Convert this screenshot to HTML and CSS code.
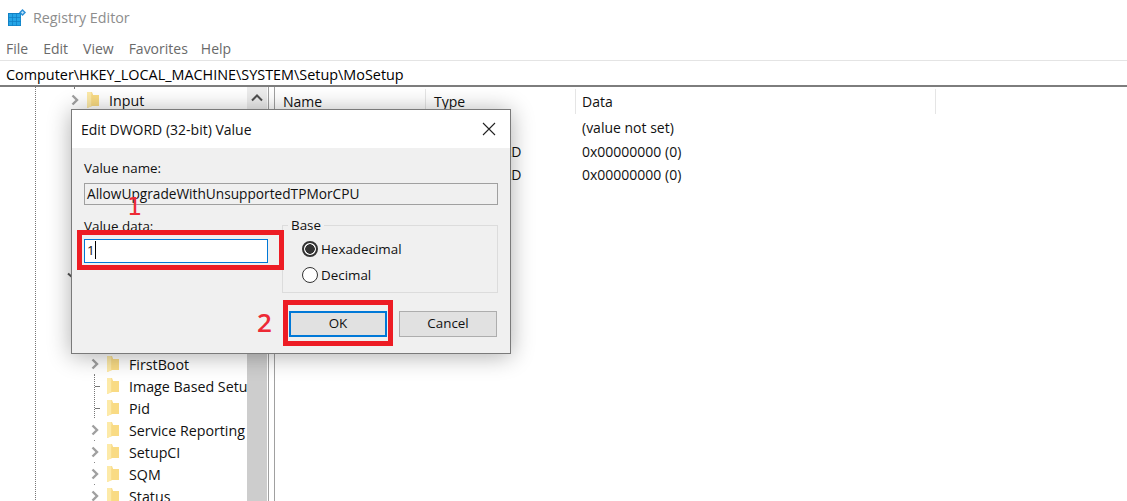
FILE: index.html
```html
<!DOCTYPE html>
<html lang="en">
<head>
<meta charset="utf-8">
<title>Registry Editor</title>
<link rel="stylesheet" href="styles.css">
</head>
<body>
<svg class="defs" width="0" height="0" aria-hidden="true">
  <symbol id="folder" viewBox="0 0 14 18">
    <path d="M1 1h5l1 3h6v11H6l-5 2z" fill="#f7d67e"/>
    <path d="M1 1h4.500v14.500L1 17z" fill="#fdeaa8"/>
    <path d="M5.500 4H13v11H5.500z" fill="#f9db84"/>
  </symbol>
  <symbol id="chev" viewBox="0 0 8 12">
    <path d="M1.500 1.500 6 6l-4.500 4.500" fill="none" stroke="#a0a0a0" stroke-width="2.400"/>
  </symbol>
</svg>
<div class="app">
  <header class="titlebar">
    <svg class="appicon" width="18" height="18" viewBox="0 0 18 18">
      <path d="M0 4h13v13H0z" fill="#1280c4"/>
      <path d="M1 5h3.300v3.300H1zM5 5h3.300v3.300H5zM9 5h3.300v3.300H9zM1 9h3.300v3.300H1zM5 9h3.300v3.300H5zM9 9h3.300v3.300H9zM1 13h3.300v3.300H1zM5 13h3.300v3.300H5zM9 13h3.300v3.300H9z" fill="#25a5e6"/>
      <path d="M14.500 0 18 3.500 14.500 7 11 3.500z" fill="#2a8fd6"/>
      <path d="M14.500 2 16 3.500 14.500 5 13 3.500z" fill="#bfe4fa"/>
    </svg>
    <span class="titletext">Registry Editor</span>
  </header>
  <nav class="menubar">
    <span class="menu">File</span>
    <span class="menu">Edit</span>
    <span class="menu">View</span>
    <span class="menu m4">Favorites</span>
    <span class="menu">Help</span>
  </nav>
  <div class="address">Computer\HKEY_LOCAL_MACHINE\SYSTEM\Setup\MoSetup</div>
  <main class="panes">
    <section class="tree">
      <div class="rows">
        <div class="row top"><svg class="chev"><use href="#chev"/></svg><svg class="folder"><use href="#folder"/></svg><span class="label">Input</span></div>
        <div class="row"></div><div class="row"></div><div class="row"></div><div class="row"></div>
        <div class="row"></div><div class="row"></div><div class="row"></div>
        <div class="row top"><svg class="chev down" viewBox="0 0 12 8"><path d="M1 1.500l5 4.500 5-4.500" fill="none" stroke="#555" stroke-width="2"/></svg></div>
        <div class="row"></div><div class="row"></div><div class="row"></div>
        <div class="row sub"><svg class="chev"><use href="#chev"/></svg><svg class="folder"><use href="#folder"/></svg><span class="label">FirstBoot</span></div>
        <div class="row sub leaf"><span class="chev"></span><svg class="folder"><use href="#folder"/></svg><span class="label">Image Based Setup</span></div>
        <div class="row sub leaf"><span class="chev"></span><svg class="folder"><use href="#folder"/></svg><span class="label">Pid</span></div>
        <div class="row sub"><svg class="chev"><use href="#chev"/></svg><svg class="folder"><use href="#folder"/></svg><span class="label">Service Reporting</span></div>
        <div class="row sub"><svg class="chev"><use href="#chev"/></svg><svg class="folder"><use href="#folder"/></svg><span class="label">SetupCI</span></div>
        <div class="row sub"><svg class="chev"><use href="#chev"/></svg><svg class="folder"><use href="#folder"/></svg><span class="label">SQM</span></div>
        <div class="row sub"><svg class="chev"><use href="#chev"/></svg><svg class="folder"><use href="#folder"/></svg><span class="label">Status</span></div>
      </div>
      <div class="scrollbar">
        <div class="sbtn"><svg width="12" height="8" viewBox="0 0 12 8"><path d="M1 6.500 6 1.500l5 5" fill="none" stroke="#505050" stroke-width="2"/></svg></div>
        <div class="thumb"></div>
      </div>
    </section>
    <section class="list">
      <div class="lhead">
        <span class="lcol c1">Name</span>
        <span class="lcol c2">Type</span>
        <span class="lcol c3">Data</span>
      </div>
      <div class="lrow"><span class="c1"></span><span class="c2"></span><span class="c3">(value not set)</span></div>
      <div class="lrow"><span class="c1"></span><span class="c2">REG_DWORD</span><span class="c3">0x00000000 (0)</span></div>
      <div class="lrow"><span class="c1"></span><span class="c2">REG_DWORD</span><span class="c3">0x00000000 (0)</span></div>
    </section>
  </main>
</div>

<div class="dialog">
  <div class="dtitle">
    <span>Edit DWORD (32-bit) Value</span>
    <svg class="close" width="14" height="14" viewBox="0 0 14 14"><path d="M1 1l12 12M13 1 1 13" stroke="#222" stroke-width="1.100" fill="none"/></svg>
  </div>
  <div class="dbody">
    <div class="dlabel">Value name:</div>
    <div class="namefield">AllowUpgradeWithUnsupportedTPMorCPU</div>
    <div class="split">
      <div class="datacol">
        <div class="dlabel">Value data:</div>
        <div class="datafield"><span class="caret">1</span></div>
      </div>
      <fieldset class="base">
        <legend>Base</legend>
        <div class="radio on"><span class="dot"></span>Hexadecimal</div>
        <div class="radio"><span class="dot"></span>Decimal</div>
      </fieldset>
    </div>
    <div class="buttons">
      <div class="btn ok">OK</div>
      <div class="btn">Cancel</div>
    </div>
  </div>
  <div class="mark mark-data"></div>
  <div class="mark mark-ok"></div>
  <span class="num num1">1</span>
  <span class="num num2">2</span>
</div>
</body>
</html>
```
FILE: styles.css
```css
* { box-sizing: border-box; }
html, body { margin: 0; height: 100%; }
body {
  background: #fff;
  font-family: "Open Sans", "Noto Sans", "Liberation Sans", sans-serif;
  font-size: 14px;
  color: #111;
  overflow: hidden;
  position: relative;
}
.defs { position: absolute; }
.app { display: flex; flex-direction: column; height: 501px; }

.titlebar { height: 36px; display: flex; align-items: center; padding: 0 0 2px 8px; gap: 7px; flex: none; }
.appicon { margin-top: 2px; }
.titletext { font-size: 14.300px; color: #8d8d8d; }
.menubar { height: 24px; flex: none; display: flex; align-items: center; padding: 1px 0 0 6px; color: #6a6a6a; font-size: 14px; }
.menu { margin-right: 15px; }
.menu.m4 { margin-right: 13px; }
.address {
  height: 27px; flex: none; border-top: 1px solid #e4e4e4; border-bottom: 2px solid #7d7d7d;
  padding: 4px 0 0 6px; line-height: 20px; font-size: 14.400px; color: #000; white-space: nowrap;
}

.panes { flex: 1; display: flex; min-height: 0; }
.tree {
  width: 269px; flex: none; display: flex; border-right: 1px solid #a0a0a0;
  background:
    linear-gradient(#777 50%, transparent 50%) 35px 0 / 1px 2px repeat-y,
    linear-gradient(#777, #777) 74px 0 / 1px 2px no-repeat;
}
.rows { width: 247px; flex: none; padding-top: 2px; overflow: hidden; }
.row { height: 22px; display: flex; align-items: center; white-space: nowrap; }
.row.top { padding-left: 71px; }
.row.sub { padding-left: 91px; background: linear-gradient(#888, #888) 94px 21px / 1px 1px no-repeat; }
.row.leaf {
  background:
    linear-gradient(#777 50%, transparent 50%) 94px 0 / 1px 2px repeat-y,
    linear-gradient(90deg, #777 50%, transparent 50%) 95px 11px / 2px 1px repeat-x;
  background-repeat: repeat-y, no-repeat;
  background-size: 1px 2px, 10px 1px;
}
.chev { width: 8px; height: 12px; flex: none; margin-right: 7px; display: block; }
.chev.down { width: 12px; height: 8px; margin-left: -4px; }
.folder { width: 14px; height: 18px; flex: none; margin-right: 9px; }
.label { font-size: 14.250px; color: #111; }

.scrollbar { width: 20px; flex: none; display: flex; flex-direction: column; background: #f0f0f0; }
.sbtn { height: 22px; display: flex; align-items: center; justify-content: center; background: #ececec; }
.thumb { flex: 1; background: #cdcdcd; }

.list { flex: 1; margin-left: 5px; border-left: 1px solid #a0a0a0; font-size: 14px; }
.lhead { display: flex; height: 29px; padding-top: 2px; }
.lcol { height: 25px; line-height: 25px; border-right: 1px solid #e5e5e5; padding-left: 8px; }
.lhead .c1 { width: 151px; }
.lhead .c2 { width: 150px; }
.lhead .c3 { width: 360px; padding-left: 6px; }
.lrow { display: flex; height: 23.5px; line-height: 23px; white-space: nowrap; }
.lrow .c1 { width: 151px; }
.lrow .c2 { width: 150px; padding-left: 10px; }
.lrow .c3 { padding-left: 6px; }

.dialog {
  position: absolute; left: 71px; top: 109px; width: 440px; height: 245px;
  background: #f0f0f0; border: 1px solid #7a7a7a;
  box-shadow: 0 2px 22px rgba(0, 0, 0, .32);
  display: flex; flex-direction: column;
}
.dtitle {
  height: 38px; flex: none; background: #fff; display: flex; align-items: center; justify-content: space-between;
  padding: 0 14px 0 9px; font-size: 14px; color: #111;
}
.dbody { flex: 1; padding: 11px 12px 0; display: flex; flex-direction: column; font-size: 13.400px; }
.dlabel { height: 18px; line-height: 18px; }
.namefield {
  margin-top: 6px; height: 22px; line-height: 20px; padding-left: 2px; width: 414px; font-size: 13.700px;
  background: #f0f0f0; border: 1px solid #a0a0a0;
}
.split { display: flex; margin-top: 12px; height: 77px; gap: 14px; }
.datacol { width: 184px; flex: none; }
.datafield {
  margin-top: 4px; height: 24px; background: #fff; border: 1px solid #0078d7; padding-left: 2px; line-height: 21px;
}
.caret { border-right: 1px solid #000; }
.base {
  margin: 0; padding: 3px 0 0 19px; width: 216px; height: 76px; border: 1px solid #dcdcdc; min-width: 0;
}
.base legend { padding: 0 3px; margin-left: -14px; line-height: 16px; }
.radio { display: flex; align-items: center; height: 26px; gap: 3px; }
.dot {
  width: 16px; height: 16px; border-radius: 50%; background: #fff; border: 1px solid #333; flex: none;
}
.radio.on .dot { background: radial-gradient(circle, #333 0 4.500px, #fff 5px); border-width: 2px; }

.buttons { display: flex; justify-content: flex-end; gap: 12px; margin-top: 17px; padding-right: 1px; }
.btn {
  width: 98px; height: 26px; background: #e1e1e1; border: 1px solid #adadad; text-align: center; line-height: 23px;
}
.btn.ok { border: 2px solid #0078d7; line-height: 21px; }

.mark { position: absolute; border: 5px solid #ed1c24; }
.mark-data { left: 5px; top: 120px; width: 207px; height: 40px; }
.mark-ok { left: 211px; top: 190px; width: 110px; height: 46px; }
.num { position: absolute; color: #ed2a35; line-height: 18px; }
.num1 { left: 55px; top: 88px; font-family: "DejaVu Sans", sans-serif; font-size: 24px; }
.num2 { left: 185px; top: 203px; font-size: 26px; font-weight: 600; }
```
